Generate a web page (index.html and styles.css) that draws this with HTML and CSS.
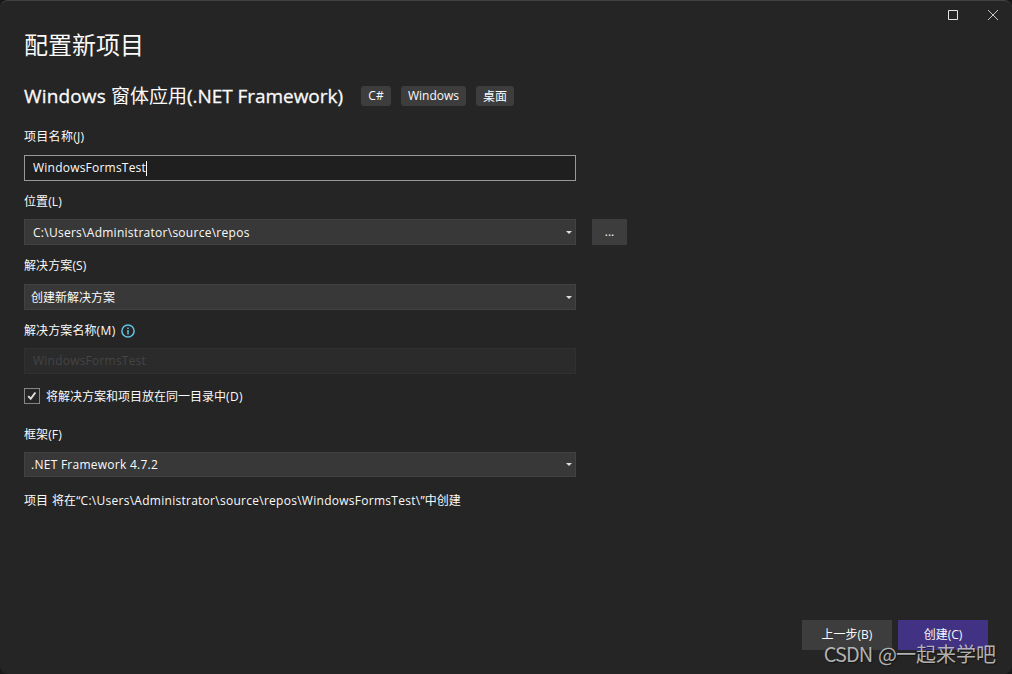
FILE: index.html
```
<!DOCTYPE html>
<html lang="zh-CN">
<head>
  <meta charset="UTF-8">
  <meta name="viewport" content="width=device-width, initial-scale=1.0">
  <title>配置新项目</title>
  <link rel="stylesheet" href="styles.css">
</head>
<body>
  <div class="dialog">
    <div class="titlebar">
      <svg class="window-icon" width="10" height="10" viewBox="0 0 10 10"><path d="M.5.5h9v9h-9z"/></svg>
      <svg class="window-icon close" width="10" height="10" viewBox="0 0 10 10"><path d="M0 0l10 10M10 0L0 10"/></svg>
    </div>

    <form class="content">
      <h1>配置新项目</h1>
      <div class="template">
        <h2><span class="latin product">Windows </span>窗体应用<span class="latin">(.NET Framework)</span></h2>
        <div class="tags">
          <span class="tag tag-lang">C#</span>
          <span class="tag tag-os">Windows</span>
          <span class="tag tag-type">桌面</span>
        </div>
      </div>

      <div class="field name">
        <label>项目名称(J)</label>
        <div class="input focused"><span class="wide">WindowsFormsTest</span><i class="caret"></i></div>
      </div>

      <div class="field location">
        <label>位置(L)</label>
        <div class="row">
          <div class="input select"><span class="path">C:\Users\Administrator\source\repos</span>
            <svg class="arrow" width="6" height="3" viewBox="0 0 6 3"><path d="M0 0h6L3 3z"/></svg>
          </div>
          <button type="button" class="browse">...</button>
        </div>
      </div>

      <div class="field solution">
        <label>解决方案(S)</label>
        <div class="input select list"><span>创建新解决方案</span>
          <svg class="arrow" width="6" height="3" viewBox="0 0 6 3"><path d="M0 0h6L3 3z"/></svg>
        </div>
      </div>

      <div class="field solution-name">
        <label><span>解决方案名称<span class="key">(M)</span></span>
          <svg class="info" width="14" height="14" viewBox="0 0 14 14">
            <circle cx="7" cy="7" r="6.1"/>
            <path d="M7 6v4.6M7 3.4v1.5"/>
          </svg>
        </label>
        <div class="input disabled"><span class="wide">WindowsFormsTest</span></div>
      </div>

      <div class="check">
        <span class="box">
          <svg width="14" height="14" viewBox="0 0 14 14"><path d="M3.2 7.1l2.5 2.7 4.7-6.3"/></svg>
        </span>
        <span class="check-text">将解决方案和项目放在同一目录中<span class="key">(D)</span></span>
      </div>

      <div class="field framework">
        <label>框架(F)</label>
        <div class="input select list"><span class="version">.NET Framework 4.7.2</span>
          <svg class="arrow" width="6" height="3" viewBox="0 0 6 3"><path d="M0 0h6L3 3z"/></svg>
        </div>
      </div>

      <p class="summary">项目 将在<span class="path">“C:\Users\Administrator\source\repos\WindowsFormsTest\”</span>中创建</p>
    </form>

    <div class="footer">
      <button type="button" class="button">上一步(B)</button>
      <button type="button" class="button primary">创建(C)</button>
    </div>
    <div class="watermark"><span class="site">CSDN @</span>一起来学吧</div>
  </div>
</body>
</html>
```
FILE: styles.css
```
* {
  box-sizing: border-box;
}
body {
  margin: 0;
  background-color: #181818;
  color: #fafafa;
  font-family: "Open Sans", "Noto Sans CJK SC", sans-serif;
  font-size: 12px;
  line-height: 18px;
}
.dialog {
  position: relative;
  display: flex;
  flex-direction: column;
  height: 674px;
  background-color: #252525;
  border-top: 1px solid #424242;
  border-radius: 8px;
  overflow: hidden;
}
.titlebar {
  display: flex;
  justify-content: flex-end;
  gap: 30px;
  height: 26px;
  padding: 9px 14px 0 0;
}
.window-icon {
  fill: none;
  stroke: #e4e4e4;
}
.close {
  stroke: #c8c8c8;
}
.content {
  flex: 1;
  padding: 0 24px;
}
h1, h2, p {
  margin: 0;
  font-weight: 400;
}
h1 {
  font-size: 24px;
  line-height: 36px;
}
.template {
  display: flex;
  align-items: center;
  height: 30px;
  margin: 18px 0 17px;
}
h2 {
  width: 337px;
  font-size: 19px;
  line-height: 30px;
  white-space: nowrap;
}
.latin {
  letter-spacing: -.05px;
  -webkit-text-stroke: .3px #fafafa;
}
.product {
  letter-spacing: .15px;
}
.tags {
  display: flex;
  gap: 10px;
}
.tag {
  height: 20px;
  border-radius: 3px;
  background-color: #3d3d3d;
  line-height: 20px;
  text-align: center;
}
.tag-lang {
  width: 30px;
}
.tag-os {
  width: 65px;
}
.tag-type {
  width: 38px;
  line-height: 21px;
}
.field label {
  display: flex;
  align-items: center;
  gap: 5px;
  height: 18px;
  margin-bottom: 9px;
  padding-top: 1px;
  letter-spacing: .1px;
}
.name label {
  padding-top: 0;
  letter-spacing: .3px;
}
.solution label {
  padding-top: 0;
}
.key {
  letter-spacing: .4px;
}
.input {
  display: flex;
  align-items: center;
  width: 552px;
  height: 26px;
  padding: 0 3px 0 8px;
  border: 1px solid #424242;
  background-color: #383838;
}
.select > span {
  padding-top: 2px;
}
.focused {
  border-color: #999;
  background-color: #1f1f1f;
}
.wide {
  letter-spacing: .22px;
}
.path {
  letter-spacing: .27px;
}
.caret {
  width: 1px;
  height: 15px;
  background-color: #fff;
}
.list {
  padding-left: 6px;
}
.list .version {
  padding-top: 0;
  letter-spacing: .26px;
}
.disabled {
  border-color: #303030;
  background-color: #2b2b2b;
  color: #444;
}
.arrow {
  margin-left: auto;
  fill: #dedede;
}
.location {
  margin-top: 11px;
}
.row {
  display: flex;
  gap: 16px;
}
button {
  padding: 0;
  border: none;
  background-color: #3d3d3d;
  color: #fafafa;
  font: inherit;
}
.browse {
  width: 35px;
  height: 26px;
}
.solution {
  margin-top: 12px;
}
.solution-name {
  margin-top: 11px;
}
.info {
  fill: none;
  stroke: #62c3e5;
  stroke-width: 1.5;
}
.check {
  display: flex;
  align-items: center;
  gap: 6px;
  height: 16px;
  margin-top: 14px;
}
.check-text {
  padding-top: 2px;
}
.box {
  display: flex;
  width: 16px;
  height: 16px;
  border: 1px solid #858585;
}
.box svg {
  fill: none;
  stroke: #ddd;
  stroke-width: 2;
}
.framework {
  margin-top: 21px;
}
.framework .input {
  height: 25px;
}
.summary {
  margin-top: 15px;
  word-spacing: 1px;
}
.footer {
  display: flex;
  justify-content: flex-end;
  gap: 6px;
  padding: 0 24px 24px 0;
}
.button {
  width: 90px;
  height: 30px;
}
.primary {
  background-color: #413283;
}
.watermark {
  position: absolute;
  right: 16px;
  bottom: 7px;
  color: rgba(205, 205, 205, .85);
  font-family: "Noto Sans CJK SC", sans-serif;
  font-size: 20px;
  line-height: 26px;
  white-space: nowrap;
  text-shadow: 1px 1px 1px rgba(0, 0, 0, .5);
}
.site {
  letter-spacing: -.9px;
  word-spacing: 2px;
}
```
